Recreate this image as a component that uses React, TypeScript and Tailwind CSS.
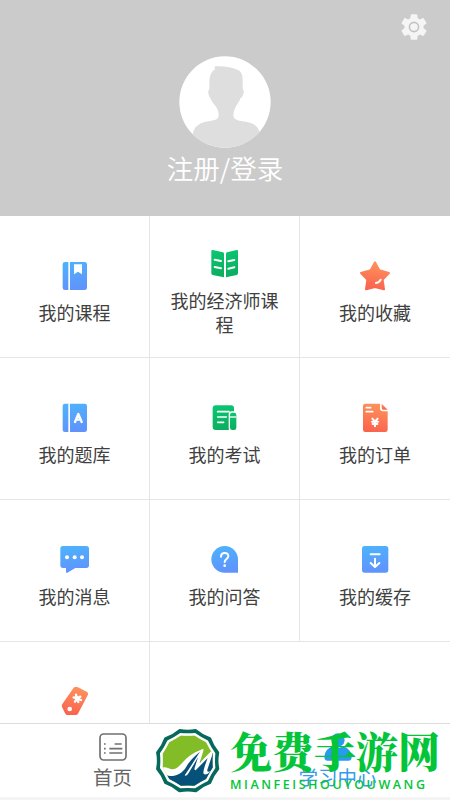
import type { ReactNode } from "react";
import { MdSettings } from "react-icons/md";

const BLUE = "url(#blue)";
const GREEN = "url(#green)";
const ORANGE = "url(#orange)";

function Gradients() {
  return (
    <svg className="absolute" width="0" height="0" aria-hidden="true">
      <defs>
        <linearGradient id="blue" x1="0" y1="0" x2="0.2" y2="1">
          <stop offset="0" stopColor="#4db4fd" />
          <stop offset="1" stopColor="#5f94fc" />
        </linearGradient>
        <linearGradient id="green" x1="0" y1="0" x2="0.2" y2="1">
          <stop offset="0" stopColor="#08c872" />
          <stop offset="1" stopColor="#0cae60" />
        </linearGradient>
        <linearGradient id="orange" x1="0.2" y1="0" x2="0" y2="1">
          <stop offset="0" stopColor="#fd8f5b" />
          <stop offset="1" stopColor="#fa5f4c" />
        </linearGradient>
      </defs>
    </svg>
  );
}

const items: { label?: string; icon: ReactNode }[] = [
  {
    label: "我的课程",
    icon: (
      <>
        <path fill={BLUE} d="M24 12H83Q90 12 90 19V89Q90 96 83 96H24Q17 96 17 89V19Q17 12 24 12Z" />
        <path fill="#fff" d="M34 11h5v86h-5zM51 19h24v30l-12-8-12 8z" />
      </>
    ),
  },
  {
    label: "我的经济师课程",
    icon: (
      <>
        <path fill={GREEN} d="M17 12L48 19Q51 20 51 23V94L17 87Q13 86 13 82V15Q13 11 17 12Z" />
        <path fill={GREEN} d="M89 12L60 19Q57 20 57 23V94L89 87Q93 86 93 82V15Q93 11 89 12Z" />
        <path stroke="#fff" strokeWidth="6" strokeLinecap="round" d="M23 41l19 4M23 63l19 4M64 46l18-4M64 68l18-4" />
      </>
    ),
  },
  {
    label: "我的收藏",
    icon: (
      <>
        <path
          fill={ORANGE}
          stroke={ORANGE}
          strokeWidth="6"
          strokeLinejoin="round"
          d="M54 13L67 37L96 45L77 65L81 94L54 87L27 94L31 65L12 45L41 37Z"
        />
        <path fill="none" stroke="#fff" strokeWidth="6" strokeLinecap="round" d="M57 75Q67 74 71 65" />
      </>
    ),
  },
  {
    label: "我的题库",
    icon: (
      <>
        <path fill={BLUE} d="M24 11H83Q90 11 90 18V89Q90 96 83 96H24Q17 96 17 89V18Q17 11 24 11Z" />
        <path fill="#fff" d="M34 10h5v87h-5z" />
        <path fill="none" stroke="#fff" strokeWidth="7" strokeLinecap="round" strokeLinejoin="round" d="M54 66L64 42L74 66M57 59H71" />
      </>
    ),
  },
  {
    label: "我的考试",
    icon: (
      <>
        <rect x="17" y="16" width="64" height="74" rx="9" fill={GREEN} />
        <path stroke="#fff" strokeWidth="5" strokeLinecap="round" d="M32 35H66M32 51H58M32 67H50" />
        <rect x="65" y="34" width="26" height="60" rx="10" fill="#fff" />
        <rect x="69" y="38" width="19" height="52" rx="7" fill={GREEN} />
        <path stroke="#fff" strokeWidth="4" d="M69 51H88" />
      </>
    ),
  },
  {
    label: "我的订单",
    icon: (
      <>
        <path fill={ORANGE} d="M25 11H69V25Q69 34 78 34H92V89Q92 96 85 96H25Q18 96 18 89V18Q18 11 25 11Z" />
        <path fill={ORANGE} d="M74 11L92 29H79Q74 29 74 24Z" />
        <path stroke="#fff" strokeWidth="5" strokeLinecap="round" d="M28 23H41M28 35H47" />
        <path fill="none" stroke="#fff" strokeWidth="6" strokeLinecap="round" d="M46 56L54 64L62 56M54 64V79M45 65H63M47 72H61" />
      </>
    ),
  },
  {
    label: "我的消息",
    icon: (
      <>
        <path fill={BLUE} d="M18 12H88Q96 12 96 20V70Q96 78 88 78H55L31 92Q27 94 27 89V78H18Q10 78 10 70V20Q10 12 18 12Z" />
        <circle cx="30" cy="46" r="6" fill="#fff" />
        <circle cx="53" cy="46" r="6" fill="#fff" />
        <circle cx="75" cy="46" r="6" fill="#fff" />
      </>
    ),
  },
  {
    label: "我的问答",
    icon: (
      <>
        <path fill={BLUE} d="M53 12A40 40 0 0 1 93 52V92H53A40 40 0 0 1 53 12Z" />
        <path fill="none" stroke="#fff" strokeWidth="6" strokeLinecap="round" d="M42 44Q42 33 53 33T64 43C64 51 53 51 53 60" />
        <circle cx="53" cy="71" r="4" fill="#fff" />
      </>
    ),
  },
  {
    label: "我的缓存",
    icon: (
      <>
        <rect x="15" y="12" width="79" height="80" rx="8" fill={BLUE} />
        <path fill="none" stroke="#fff" strokeWidth="6" strokeLinecap="round" strokeLinejoin="round" d="M41 37H68M54 50V74M41 63L54 75L67 63" />
      </>
    ),
  },
  {
    icon: (
      <>
        <path fill={ORANGE} d="M50 11Q56 6 63 10L89 23Q96 27 92 34L63 89Q61 93 56 93H32Q27 93 25 89L15 69Q13 65 16 60Z" />
        <circle cx="38" cy="75" r="7" fill="#fff" />
        <path stroke="#fff" strokeWidth="7" strokeLinecap="round" d="M57 32L60 43M70 38L60 43M72 48L60 43M54 53L60 43M50 40L60 43M64 54L60 43" />
      </>
    ),
  },
];

function Header() {
  return (
    <header className="relative flex h-[216px] shrink-0 flex-col items-center bg-[#cbcbcb] pt-14">
      <button className="absolute top-[11px] right-5 text-[#f5f5f5]" aria-label="设置">
        <MdSettings size={32} />
        <svg className="absolute inset-0" width="32" height="32" viewBox="0 0 32 32">
          <circle cx="16" cy="16" r="4.6" fill="#f5f5f5" stroke="#c4c4c4" strokeWidth="1.6" />
        </svg>
      </button>
      <svg width="92" height="92" viewBox="0 0 276 276">
        <clipPath id="avatar">
          <circle cx="138" cy="138" r="137" />
        </clipPath>
        <g clipPath="url(#avatar)">
          <rect width="276" height="276" fill="#fff" />
          <path
            fill="#dedede"
            d="M108 31Q150 29 179 43Q191 51 191 72V98Q196 103 193 114Q191 123 185 126C178 145 165 151 163 178Q163 193 190 196C225 200 238 210 242 232V276H40V240Q44 204 80 197C112 192 119 190 119 176C118 151 101 146 94 126Q89 122 88 112Q87 103 91 100V74Q93 49 108 40Q106 36 108 31Z"
          />
        </g>
      </svg>
      <p className="mt-0.5 text-[26.5px] leading-9 font-[350] text-white">注册/登录</p>
    </header>
  );
}

function MenuGrid() {
  return (
    <main className="grid min-h-0 flex-1 auto-rows-[142px] grid-cols-3 overflow-hidden">
      {items.map(({ label, icon }, i) => (
        <div
          key={i}
          className="flex flex-col items-center justify-center border-b border-[#e5e5e5] px-4 not-nth-[3n]:border-r"
        >
          <svg className="mt-[9px] mb-1.5 shrink-0" width="36" height="36" viewBox="0 0 108 108">
            {icon}
          </svg>
          <p className="mb-px min-h-6 text-center text-[18px] leading-6 text-[#404040]">{label}</p>
        </div>
      ))}
    </main>
  );
}

function TabBar() {
  return (
    <nav className="grid h-[77px] shrink-0 grid-cols-2 border-t border-[#dcdcdc] border-b-[3px] border-b-[#f4f4f4] bg-white text-[19.5px] leading-7 text-[#666]">
      <a className="flex flex-col items-center pt-2">
        <svg width="30" height="30" viewBox="0 0 90 90" fill="none" stroke="#707070" strokeWidth="5">
          <rect x="6" y="6" width="78" height="78" rx="11" />
          <path d="M50 36H71M34 50H73M34 63H73M18 36H23M18 50H23M18 63H23" />
        </svg>
        <span className="mt-px">首页</span>
      </a>
      <a className="flex flex-col items-center pt-2 text-[#389aeb]">
        <svg width="30" height="30" viewBox="0 0 90 90" fill="#289af0">
          <circle cx="45" cy="24" r="20" />
          <path d="M30 42Q45 55 60 42Q86 52 86 75Q86 86 76 86H14Q4 86 4 75Q4 52 30 42Z" />
        </svg>
        <span className="mt-px">学习中心</span>
      </a>
    </nav>
  );
}

// twelve-sided badge outline, with edges pulled in towards the centre by `dip`
function scallop(r: number, dip: number) {
  const point = (deg: number, radius: number) => {
    const a = (deg * Math.PI) / 180;
    return `${(101 + radius * Math.cos(a)).toFixed(1)} ${(95 + radius * Math.sin(a)).toFixed(1)}`;
  };
  let d = `M${point(15, r)}`;
  for (let deg = 45; deg <= 375; deg += 30) {
    d += `Q${point(deg - 15, r - dip)} ${point(deg, r)}`;
  }
  return d + "Z";
}

function SiteBadge() {
  return (
    <div className="absolute bottom-[6px] left-[154px] flex items-start">
      <svg width="68" height="65" viewBox="0 0 204 195">
        <clipPath id="badge">
          <path d={scallop(78, 4)} />
        </clipPath>
        <path fill="#07685c" stroke="#07685c" strokeWidth="8" strokeLinejoin="round" d={scallop(94, 8)} />
        <path fill="#fff" d={scallop(86, 5)} />
        <g clipPath="url(#badge)">
          <rect width="204" height="195" fill="#82bd27" />
          <path fill="#05517a" d="M20 136Q66 142 88 110Q104 84 140 66L139 100L184 66V195H20Z" />
          <path fill="#fff" d="M18 117Q30 112 44 118Q56 124 68 117C88 104 96 76 150 60Q112 86 97 113C80 143 45 148 18 132Z" />
          <path fill="#fff" d="M92 139Q108 116 143 60L149 62L137 102L172 66L178 68L160 122Q158 131 170 127Q156 141 149 134Q145 129 161 87L125 124Q120 124 122 116L132 85L104 132Q98 143 92 139Z" />
        </g>
      </svg>
      <div className="pl-2 text-[#04c43a]">
        <p className="-mt-0.5 h-[50px] font-['Noto_Serif_CJK_SC','Noto_Sans_CJK_SC',serif] text-[42px] leading-[46px] font-black whitespace-nowrap">
          免费手游网
        </p>
        <p className="font-['Open_Sans',sans-serif] text-[12.5px] leading-4 font-semibold tracking-[2.55px] whitespace-nowrap">
          MIANFEISHOUYOUWANG
        </p>
      </div>
    </div>
  );
}

export default function App() {
  return (
    <div className="relative flex h-[800px] w-[450px] flex-col overflow-hidden bg-white font-['Noto_Sans_CJK_SC',sans-serif]">
      <Gradients />
      <Header />
      <MenuGrid />
      <TabBar />
      <SiteBadge />
    </div>
  );
}
